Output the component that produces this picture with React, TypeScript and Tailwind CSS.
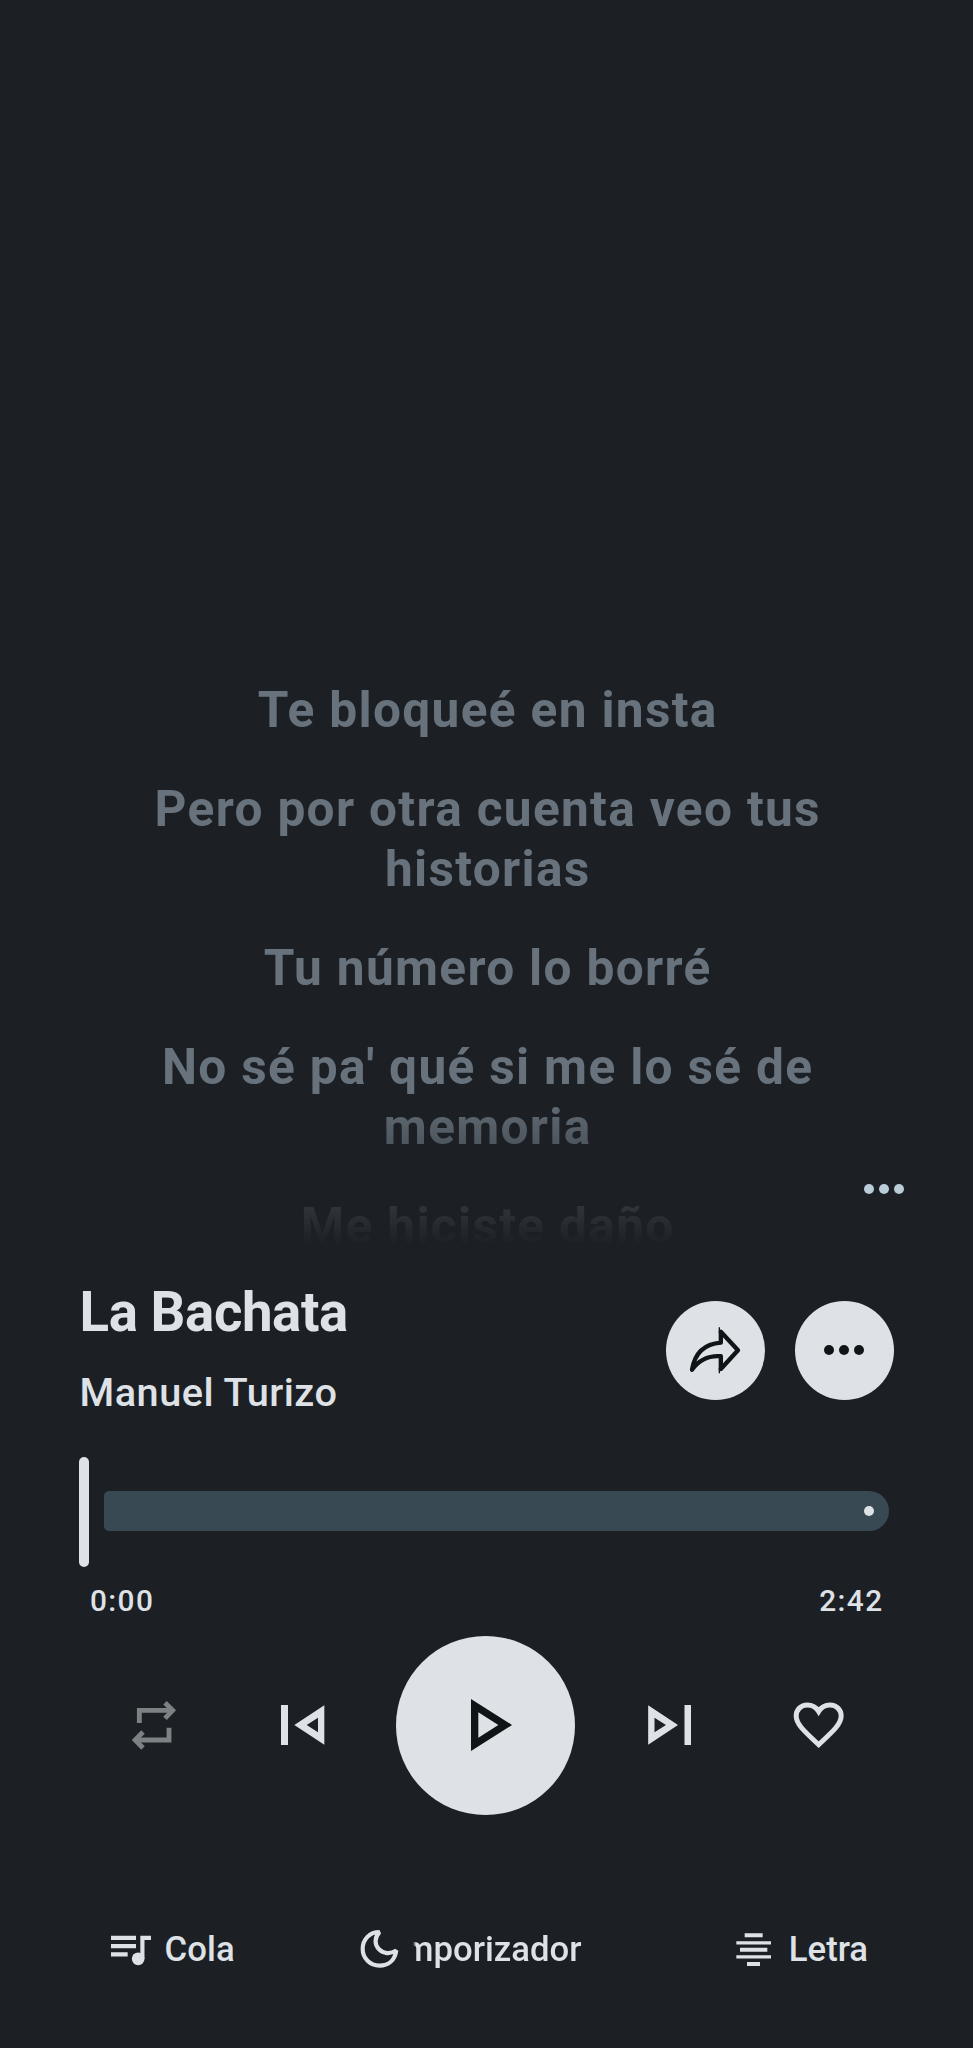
import React from 'react';

const lyrics: string[][] = [
  ['Te bloqueé en insta'],
  ['Pero por otra cuenta veo tus', 'historias'],
  ['Tu número lo borré'],
  ["No sé pa' qué si me lo sé de", 'memoria'],
  ['Me hiciste daño'],
];

function Dots({ className }: { className: string }) {
  return (
    <svg viewBox="0 0 40 10" className={className} fill="currentColor">
      <circle cx="5" cy="5" r="5" />
      <circle cx="20" cy="5" r="5" />
      <circle cx="35" cy="5" r="5" />
    </svg>
  );
}

function ShareIcon() {
  return (
    <svg viewBox="0 0 160 144" className="mr-[2px] h-[48px] w-[53.33px]" fill="none" stroke="currentColor" strokeWidth="13">
      <path d="M98.500 17L150 73L98.500 129V90.500C64 88 34 100 12 131C20 84 46 54 98.500 50Z" strokeLinejoin="round" />
      <path d="M94 4V20M94 126V142" strokeWidth="4" />
    </svg>
  );
}

function RepeatIcon() {
  return (
    <svg viewBox="60 60 144 150" className="h-[50px] w-[48px]" fill="none" stroke="currentColor" strokeWidth="14.5">
      <path d="M88 129V91H186" />
      <path d="M165 68L188 91L165 115" />
      <path d="M177 143V180H78" />
      <path d="M99 156L75.500 180L99 204" />
    </svg>
  );
}

function PreviousIcon() {
  return (
    <svg viewBox="513 75 131 120" className="h-[40px] w-[43.67px]" fill="currentColor" fillRule="evenodd">
      <path d="M513 75H534V195H513Z" />
      <path d="M553 135L643 76V194ZM590 135L624 157V113Z" />
    </svg>
  );
}

function NextIcon() {
  return (
    <svg viewBox="143 75 131 120" className="h-[40px] w-[43.67px]" fill="currentColor" fillRule="evenodd">
      <path d="M252.500 75H273.500V195H252.500Z" />
      <path d="M233 135L143.500 76V194ZM197 135L162.500 157V113Z" />
    </svg>
  );
}

function HeartIcon() {
  return (
    <svg viewBox="580 66 154 140" className="h-[46.67px] w-[51.33px]" fill="none" stroke="currentColor" strokeWidth="15">
      <path d="M657 194C613 153 589.500 132 589.500 108C589.500 89 604 75 622.500 75C637 75 650 82.500 657 94C664 82.500 677 75 691.500 75C710 75 724.500 89 724.500 108C724.500 132 701 153 657 194Z" />
    </svg>
  );
}

function QueueIcon() {
  return (
    <svg viewBox="62 90 120 120" className="size-[40px]" fill="currentColor">
      <path d="M62 110H137V123H62ZM62 135H137V147.500H62ZM62 160H112V172.500H62Z" />
      <path d="M150 110H182V123H162.500V180H150Z" />
      <circle cx="143.500" cy="179.500" r="19" />
    </svg>
  );
}

function MoonIcon() {
  return (
    <svg viewBox="808 88 120 120" className="size-[40px]" fill="none" stroke="currentColor" strokeWidth="12.5">
      <path d="M866.500 97C837 97 816 119 816 147.500C816 176 838 198 866.500 198C893 198 912.500 182 917 152C897 166 877 161 865 149C852 136 850 115 866.500 97Z" strokeLinejoin="miter" strokeMiterlimit="2" />
    </svg>
  );
}

function LyricsIcon() {
  return (
    <svg viewBox="108 95 106 100" className="h-[33.33px] w-[35.33px]" fill="currentColor">
      <path d="M134 96H188V108H134ZM109 120H213V129.500H109ZM120 139H202V151H120ZM109 162H213V171.500H109ZM141 182H180V194H141Z" />
    </svg>
  );
}

export default function App() {
  return (
    <main className="flex h-[2048px] w-[973px] flex-col overflow-hidden bg-[#1c2024] font-['Roboto','Noto_Sans',sans-serif] text-[#dee2e7]">
      <section className="relative h-[1262px] shrink-0">
        <div className="flex h-[1262px] flex-col gap-[39px] pt-[680px] pl-[2.500px] text-center text-[49.6px] leading-[60px] font-bold tracking-[1.32px] text-[#68727c] [mask-image:linear-gradient(to_bottom,black_1090px,transparent_1246px)]">
          {lyrics.map((lines) => (
            <p key={lines[0]}>
              {lines.map((line) => (
                <span key={line} className="block">
                  {line}
                </span>
              ))}
            </p>
          ))}
        </div>
        <button aria-label="Opciones de letra" className="absolute top-[1184px] right-[69px] flex text-[#b9ccd7]">
          <Dots className="h-[10px] w-[40px]" />
        </button>
      </section>

      <section className="flex h-[180px] shrink-0 pt-5 pr-[79.5px] pl-[79.5px]">
        <div className="flex-1">
          <h1 className="h-[86px] text-[54.6px] leading-[60px] font-bold tracking-[-0.4px]">La Bachata</h1>
          <h2 className="text-[39.7px] leading-[50px] font-medium tracking-[0.5px]">Manuel Turizo</h2>
        </div>
        <div className="flex gap-[29.5px] pt-[18.500px] text-[#101417]">
          <button aria-label="Compartir" className="flex size-[99px] items-center justify-center rounded-full bg-[#dee2e7]">
            <ShareIcon />
          </button>
          <button aria-label="Más" className="flex size-[99px] items-center justify-center rounded-full bg-[#dee2e7]">
            <Dots className="h-[10px] w-[40px]" />
          </button>
        </div>
      </section>

      <section className="h-[193.7px] shrink-0 pt-[15px] pr-[84.5px] pl-[79px]">
        <div className="flex h-[110px] items-start gap-[14.500px]">
          <div className="h-[110px] w-[10px] rounded-full bg-[#dee2e7]" />
          <div className="mt-[34px] flex h-10 flex-1 items-center justify-end rounded-l-[5px] rounded-r-[20px] bg-[#384954] pr-[15px]">
            <svg viewBox="0 0 10 10" className="size-[10px]" fill="#dee2e7">
              <circle cx="5" cy="5" r="5" />
            </svg>
          </div>
        </div>
        <div className="flex justify-between pt-[13.500px] pr-[5px] pl-[11px] text-[29.8px] leading-[40px] font-medium tracking-[1.4px]">
          <span>0:00</span>
          <span>2:42</span>
        </div>
      </section>

      <section className="flex h-[179px] shrink-0 items-center">
        <button aria-label="Repetir" className="ml-[130px] flex text-[#7d8184]">
          <RepeatIcon />
        </button>
        <button aria-label="Anterior" className="ml-[103px] flex">
          <PreviousIcon />
        </button>
        <button aria-label="Reproducir" className="ml-[71.5px] flex size-[179px] items-center justify-center rounded-full bg-[#dee2e7] text-[#101417]">
          <svg viewBox="273 239 124 156" className="ml-[12px] h-[52px] w-[41.33px]" fill="currentColor" fillRule="evenodd">
            <path d="M273 239L396.500 317L273 395ZM295 279V355L355 317Z" />
          </svg>
        </button>
        <button aria-label="Siguiente" className="ml-[72.5px] flex">
          <NextIcon />
        </button>
        <button aria-label="Me gusta" className="ml-[101.7px] flex">
          <HeartIcon />
        </button>
      </section>

      <nav className="mt-[104.500px] flex h-[60px] shrink-0 text-[34.7px] leading-[60px] font-medium">
        <button className="ml-[110.5px] flex w-[249px] items-center">
          <QueueIcon />
          <span className="ml-[14px] tracking-[0.1px]">Cola</span>
        </button>
        <button className="flex w-[376px] items-center">
          <MoonIcon />
          <span className="ml-[13px] flex w-[169px] justify-end overflow-hidden whitespace-nowrap [mask-image:linear-gradient(to_right,transparent,black_3px)]">
            Temporizador
          </span>
        </button>
        <button className="flex items-center">
          <LyricsIcon />
          <span className="ml-[18px]">Letra</span>
        </button>
      </nav>
    </main>
  );
}
